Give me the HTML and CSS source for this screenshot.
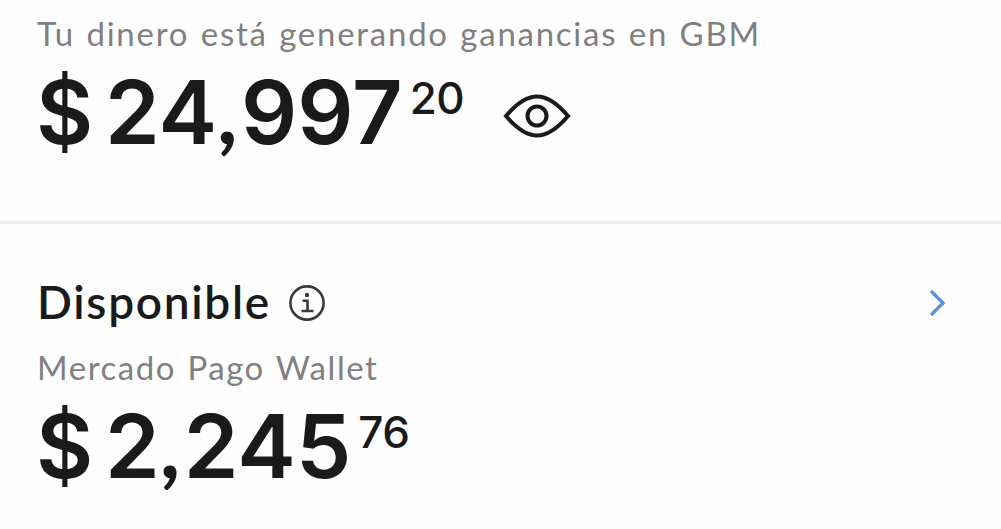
FILE: index.html
```html
<!DOCTYPE html>
<html lang="es">
<head>
    <meta charset="UTF-8">
    <meta name="viewport" content="width=device-width, initial-scale=1.0">
    <title>Mi dinero</title>
    <link rel="stylesheet" href="styles.css">
</head>
<body>
    <section class="balance">
        <p class="label">Tu dinero está generando ganancias en GBM</p>
        <div class="amount">
            <span class="currency">$</span>
            <span class="whole">24<span class="comma">,</span>997</span>
            <span class="cents">20</span>
            <svg class="eye" viewBox="0 0 68 44" width="68" height="44">
                <path d="M3 22 C25 -4 43 -4 65 22 C43 48 25 48 3 22 Z"/>
                <circle cx="34" cy="22" r="9.5"/>
            </svg>
        </div>
    </section>

    <section class="available">
        <div class="heading">
            <h2>Disponible</h2>
            <svg class="info" viewBox="0 0 38 38" width="38" height="38">
                <circle cx="19" cy="19" r="16.6"/>
                <path d="M14.5 16.7 H19.5 V27 M13.5 27 H25.5"/>
                <circle class="dot" cx="19" cy="11" r="2.2"/>
            </svg>
            <svg class="chevron" viewBox="0 0 18 28" width="18" height="28">
                <path d="M3 2 L15 14 L3 26"/>
            </svg>
        </div>
        <p class="label label-wallet">Mercado Pago Wallet</p>
        <div class="amount">
            <span class="currency">$</span>
            <span class="whole">2<span class="comma">,</span>245</span>
            <span class="cents">76</span>
        </div>
    </section>
</body>
</html>
```

FILE: styles.css
```css
body {
    margin: 0;
    background-color: #fefefe;
    color: #1a1a1a;
    font-family: 'Lato', sans-serif;
}
.balance {
    box-sizing: border-box;
    height: 224px;
    padding: 13px 37px 0;
    border-bottom: 3px solid #eeeeee;
}
.label {
    margin: 0;
    color: #808080;
    font-size: 33px;
    line-height: 40px;
    letter-spacing: 1.75px;
    word-spacing: 1.3px;
    white-space: nowrap;
}
.label-wallet {
    margin-top: 19px;
    letter-spacing: 1.55px;
}
.amount {
    display: flex;
    align-items: flex-start;
    margin-top: 15px;
    font-family: 'Inter', sans-serif;
    font-weight: 600;
    line-height: 1;
}
.currency,
.whole {
    font-size: 88px;
}
.currency {
    width: 55px;
    margin-left: -1px;
}
.whole {
    margin-left: 14px;
}
/* round comma, narrower than the digits' own */
.comma {
    display: inline-block;
    width: 24px;
    font-family: 'Lato', sans-serif;
    font-weight: bold;
    line-height: 0;
}
.cents {
    margin: 8px 0 0 7px;
    font-size: 44px;
    font-weight: 500;
    letter-spacing: -0.5px;
}
.eye {
    margin: 26px 0 0 39px;
}
.available {
    padding: 54px 55px 0 37px;
}
.heading {
    display: flex;
    align-items: center;
    height: 50px;
}
.heading h2 {
    margin: -3px 0 0;
    font-size: 46px;
    font-weight: 600;
    letter-spacing: 1.7px;
}
.info {
    margin-left: 17px;
}
.chevron {
    margin-left: auto;
}
.eye,
.info,
.chevron {
    fill: none;
    stroke: #1a1a1a;
    stroke-width: 4;
}
.info {
    stroke: #3a3a3a;
    stroke-width: 2.6;
}
.info .dot {
    fill: #3a3a3a;
    stroke: none;
}
.chevron {
    stroke: #5b93dc;
    stroke-width: 3.4;
}
```
